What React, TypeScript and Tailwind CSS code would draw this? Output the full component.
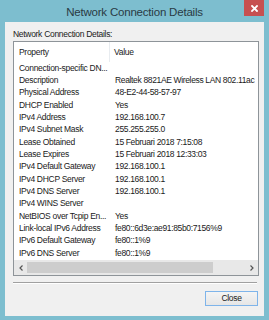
import React from "react";

const rows: [string, string][] = [
  ["Connection-specific DN...", ""],
  ["Description", "Realtek 8821AE Wireless LAN 802.11ac"],
  ["Physical Address", "48-E2-44-58-57-97"],
  ["DHCP Enabled", "Yes"],
  ["IPv4 Address", "192.168.100.7"],
  ["IPv4 Subnet Mask", "255.255.255.0"],
  ["Lease Obtained", "15 Februari 2018 7:15:08"],
  ["Lease Expires", "15 Februari 2018 12:33:03"],
  ["IPv4 Default Gateway", "192.168.100.1"],
  ["IPv4 DHCP Server", "192.168.100.1"],
  ["IPv4 DNS Server", "192.168.100.1"],
  ["IPv4 WINS Server", ""],
  ["NetBIOS over Tcpip En...", "Yes"],
  ["Link-local IPv6 Address", "fe80::6d3e:ae91:85b0:7156%9"],
  ["IPv6 Default Gateway", "fe80::1%9"],
  ["IPv6 DNS Server", "fe80::1%9"],
];

export default function App() {
  return (
    <div className="w-[269px] h-[320px] bg-[#7dbecf] flex flex-col font-['Liberation_Sans',Arial,sans-serif] text-[#1a1a1a] overflow-hidden">
      {/* title bar */}
      <div className="h-[22px] grid grid-cols-[1fr_auto_1fr] shrink-0">
        <div />
        <div className="text-[11.5px] tracking-[-0.2px] leading-[22px] text-[#2a3a44] pt-[1px]">Network Connection Details</div>
        <div className="flex justify-end items-start pr-[5px]">
          <div className="w-[20px] h-[16px] bg-[#c75050] flex items-center justify-center">
            <svg width="7" height="7" viewBox="0 0 7 7">
              <path d="M1 1L6 6M6 1L1 6" stroke="#fff" strokeWidth="1.8" strokeLinecap="square" />
            </svg>
          </div>
        </div>
      </div>

      {/* panel */}
      <div className="mx-[5px] h-[294px] bg-[#f0f0f0] flex flex-col pl-[8px] pr-[6px] tracking-[-0.3px]">
        <div className="pt-[6px] text-[8.5px] leading-[12px]">Network Connection Details:</div>

        <div className="mt-[1px] w-[246px] h-[235px] border border-[#8e9499] bg-white flex flex-col overflow-hidden text-[8.5px]">
          <div className="h-[20px] flex shrink-0">
            <div className="w-[96px] pl-[5px] border-r border-[#e8ecf0] flex items-center">Property</div>
            <div className="pl-[4px] flex items-center">Value</div>
          </div>
          <div className="flex flex-col">
            {rows.map(([k, v]) => (
              <div key={k} className="h-[12.33px] flex items-center whitespace-nowrap">
                <div className="w-[96px] pl-[5px] shrink-0">{k}</div>
                <div className="pl-[5px] tracking-[-0.35px]">{v}</div>
              </div>
            ))}
          </div>
          <div className="mt-auto h-[15px] bg-[#e8e8e8] flex items-center shrink-0">
            <div className="w-[13px] flex justify-center">
              <svg width="4" height="6" viewBox="0 0 4 6">
                <path d="M3.5 0.5L1 3L3.5 5.5" stroke="#555" strokeWidth="1.2" fill="none" />
              </svg>
            </div>
            <div className="w-[186px] h-[11px] bg-[#cdcdcd]" />
            <div className="flex-1" />
            <div className="w-[13px] flex justify-center">
              <svg width="4" height="6" viewBox="0 0 4 6">
                <path d="M0.5 0.5L3 3L0.5 5.5" stroke="#555" strokeWidth="1.2" fill="none" />
              </svg>
            </div>
          </div>
        </div>

        <div className="mt-[6px] w-[244px] border-t border-[#a0a0a0] border-b border-b-white" />

        <div className="mt-[7px] flex justify-end">
          <div className="w-[53px] h-[15px] border border-[#7eb4ea] bg-gradient-to-b from-[#f4f4f4] to-[#e6e6e6] text-[8.5px] flex items-center justify-center">
            Close
          </div>
        </div>
      </div>
    </div>
  );
}
